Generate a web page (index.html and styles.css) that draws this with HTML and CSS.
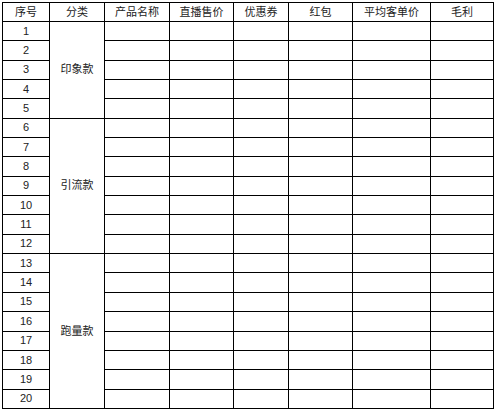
FILE: index.html
```html
<!DOCTYPE html>
<html>
<head>
<meta charset="utf-8">
<link rel="stylesheet" href="styles.css">
</head>
<body>
<div class="sheet">
  <div class="c">序号</div><div class="c">分类</div><div class="c">产品名称</div><div class="c">直播售价</div><div class="c">优惠券</div><div class="c">红包</div><div class="c">平均客单价</div><div class="c">毛利</div>

  <div class="c cat g1">印象款</div>
  <div class="c cat g2">引流款</div>
  <div class="c cat g3">跑量款</div>

  <div class="c">1</div><div class="c"></div><div class="c"></div><div class="c"></div><div class="c"></div><div class="c"></div><div class="c"></div>
  <div class="c">2</div><div class="c"></div><div class="c"></div><div class="c"></div><div class="c"></div><div class="c"></div><div class="c"></div>
  <div class="c">3</div><div class="c"></div><div class="c"></div><div class="c"></div><div class="c"></div><div class="c"></div><div class="c"></div>
  <div class="c">4</div><div class="c"></div><div class="c"></div><div class="c"></div><div class="c"></div><div class="c"></div><div class="c"></div>
  <div class="c">5</div><div class="c"></div><div class="c"></div><div class="c"></div><div class="c"></div><div class="c"></div><div class="c"></div>
  <div class="c">6</div><div class="c"></div><div class="c"></div><div class="c"></div><div class="c"></div><div class="c"></div><div class="c"></div>
  <div class="c">7</div><div class="c"></div><div class="c"></div><div class="c"></div><div class="c"></div><div class="c"></div><div class="c"></div>
  <div class="c">8</div><div class="c"></div><div class="c"></div><div class="c"></div><div class="c"></div><div class="c"></div><div class="c"></div>
  <div class="c">9</div><div class="c"></div><div class="c"></div><div class="c"></div><div class="c"></div><div class="c"></div><div class="c"></div>
  <div class="c">10</div><div class="c"></div><div class="c"></div><div class="c"></div><div class="c"></div><div class="c"></div><div class="c"></div>
  <div class="c">11</div><div class="c"></div><div class="c"></div><div class="c"></div><div class="c"></div><div class="c"></div><div class="c"></div>
  <div class="c">12</div><div class="c"></div><div class="c"></div><div class="c"></div><div class="c"></div><div class="c"></div><div class="c"></div>
  <div class="c">13</div><div class="c"></div><div class="c"></div><div class="c"></div><div class="c"></div><div class="c"></div><div class="c"></div>
  <div class="c">14</div><div class="c"></div><div class="c"></div><div class="c"></div><div class="c"></div><div class="c"></div><div class="c"></div>
  <div class="c">15</div><div class="c"></div><div class="c"></div><div class="c"></div><div class="c"></div><div class="c"></div><div class="c"></div>
  <div class="c">16</div><div class="c"></div><div class="c"></div><div class="c"></div><div class="c"></div><div class="c"></div><div class="c"></div>
  <div class="c">17</div><div class="c"></div><div class="c"></div><div class="c"></div><div class="c"></div><div class="c"></div><div class="c"></div>
  <div class="c">18</div><div class="c"></div><div class="c"></div><div class="c"></div><div class="c"></div><div class="c"></div><div class="c"></div>
  <div class="c">19</div><div class="c"></div><div class="c"></div><div class="c"></div><div class="c"></div><div class="c"></div><div class="c"></div>
  <div class="c">20</div><div class="c"></div><div class="c"></div><div class="c"></div><div class="c"></div><div class="c"></div><div class="c"></div>
</div>
</body>
</html>
```
FILE: styles.css
```css
html, body {
  margin: 0;
  padding: 0;
  background: #fff;
}
body {
  padding: 2px 0 0 2px;
}
.sheet {
  display: grid;
  grid-template-columns: 47px 55px 65px 64px 55px 64px 78px 63px;
  grid-template-rows: 19px repeat(20, 19.35px);
  width: max-content;
  border-left: 1px solid #000;
  border-top: 1px solid #000;
  font-family: "Liberation Sans", "Noto Sans CJK SC", sans-serif;
  font-size: 11px;
  color: #222;
}
.c {
  box-sizing: border-box;
  border-right: 1px solid #000;
  border-bottom: 1px solid #000;
  display: flex;
  align-items: center;
  justify-content: center;
  line-height: 1;
}
.cat {
  grid-column: 2;
}
.g1 { grid-row: 2 / span 5; }
.g2 { grid-row: 7 / span 7; }
.g3 { grid-row: 14 / span 8; }
```
